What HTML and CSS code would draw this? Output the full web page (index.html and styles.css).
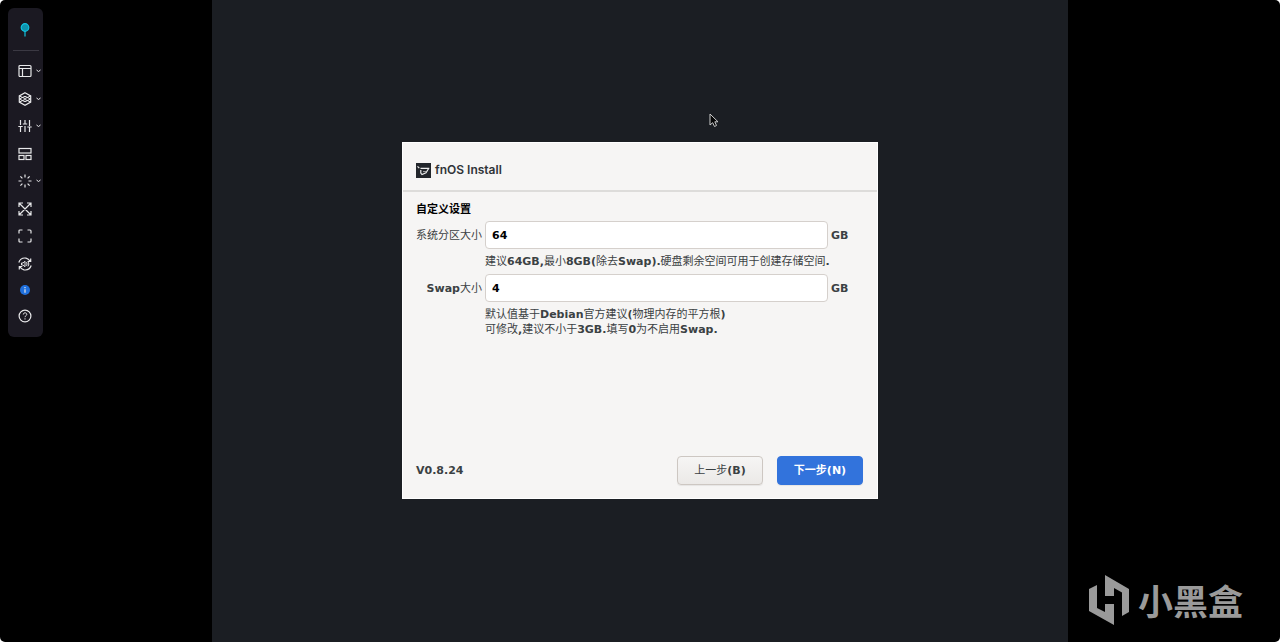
FILE: index.html
```
<!DOCTYPE html>
<html lang="zh-CN">
<head>
<meta charset="utf-8">
<title>fnOS Install</title>
<link rel="stylesheet" href="styles.css">
</head>
<body>
<div class="console">
  <nav class="toolbar" aria-label="Console">
    <button class="tool tool-pin" aria-label="Pin"><svg class="icon" viewBox="0 0 14 14"><circle cx="7" cy="4.500" r="3.800" fill="#0e93ad" stroke="#12c3e0"/><path d="M7 8v5.500" stroke="#12c3e0"/></svg></button>
    <hr class="divider">
    <button class="tool" aria-label="Layout"><svg class="icon" viewBox="0 0 14 14"><rect x="1" y="1.500" width="12" height="11" rx="1"/><path d="M1 4.500h12M4.500 4.500v8"/></svg><svg class="caret" viewBox="0 0 5 4"><path d="M.5 1l2 1.500 2-1.500"/></svg></button>
    <button class="tool" aria-label="View"><svg class="icon" viewBox="0 0 14 14"><path d="M7 .8l5.700 3.100v6.200L7 13.200l-5.700-3.100V3.900z"/><path class="fine" d="M1.300 4L7 6.500 12.700 4M1.300 10L7 7.500l5.700 2.500M1.300 7L7 4.300 12.700 7 7 9.700z"/></svg><svg class="caret" viewBox="0 0 5 4"><path d="M.5 1l2 1.500 2-1.500"/></svg></button>
    <button class="tool" aria-label="Settings"><svg class="icon" viewBox="0 0 14 14"><path d="M2.500 1v5M.3 7.500h4.400M2.500 8v5M7 1v3.500M4.800 5h4.400M7 7v6M11.500 1v6M9.300 8h4.400M11.500 8v5"/></svg><svg class="caret" viewBox="0 0 5 4"><path d="M.5 1l2 1.500 2-1.500"/></svg></button>
    <button class="tool" aria-label="Panels"><svg class="icon" viewBox="0 0 14 14"><rect x="1" y="1.500" width="12" height="4.500"/><rect x="1" y="8.500" width="5" height="4"/><rect x="8" y="8.500" width="5" height="4"/></svg></button>
    <button class="tool" aria-label="Power"><svg class="icon" viewBox="0 0 14 14"><path d="M7 .5v3M7 10.500v3M.5 7h3M10.500 7h3M2.400 2.400l2 2M9.600 9.600l2 2M11.600 2.400l-2 2M4.400 9.600l-2 2"/></svg><svg class="caret" viewBox="0 0 5 4"><path d="M.5 1l2 1.500 2-1.500"/></svg></button>
    <button class="tool" aria-label="Scale"><svg class="icon" viewBox="0 0 14 14"><path d="M1 5V1h4M9 1h4v4M13 9v4H9M5 13H1V9M1.500 1.500l11 11M12.500 1.500l-11 11"/></svg></button>
    <button class="tool" aria-label="Full screen"><svg class="icon" viewBox="0 0 14 14"><path d="M1 4.500V2q0-1 1-1h2.500M9.500 1H12q1 0 1 1v2.500M13 9.500V12q0 1-1 1H9.500M4.500 13H2q-1 0-1-1V9.500"/></svg></button>
    <button class="tool" aria-label="Audio"><svg class="icon" viewBox="0 0 14 14"><path d="M.8 5.500C2 2 5 .7 8 1.100q2.500.5 4.300 3.200M12.700 1.500v3h-3M13.200 8.500C12 12 9 13.300 6 12.900q-2.500-.5-4.300-3.200M1.300 12.500v-3h3"/><path class="fine" d="M3.500 6v2H5l2 1.700V4.300L5 6zM8.500 5.200q1.200 1.800 0 3.600M10 4.600q1.800 2.400 0 4.800"/></svg></button>
    <button class="tool tool-info" aria-label="Info"><svg class="icon" viewBox="0 0 14 14"><circle cx="7" cy="7" r="5" fill="#1f6fdc" stroke="none"/><path d="M7 6.200v3.600M7 4v1.200"/></svg></button>
    <button class="tool" aria-label="Help"><svg class="icon" viewBox="0 0 14 14"><circle cx="7" cy="7" r="5.900"/><path class="fine" d="M5.300 5.500C5.300 3.200 8.800 3.300 8.800 5.400 8.800 6.700 7 6.700 7 8.200M7 9.300v1.200"/></svg></button>
  </nav>

  <main class="screen">
    <form class="dialog">
      <header class="dialog-head">
        <svg class="app-logo" viewBox="0 0 15 15"><path fill="#22262b" d="M0 0h15v15H0z"/><path d="M1.500 3.300l1.800 1.900M4.500 5.300h8.800M4.800 7v3l1.200 1.500 4-1.700 2.500-4" fill="none" stroke="#eee" stroke-width="1.200"/><path d="M7 8.600h3.200" stroke="#aaa"/></svg>
        <h1 class="title">fnOS Install</h1>
      </header>
      <section class="content">
        <h2 class="subtitle">自定义设置</h2>
        <div class="fields">
          <label class="name" for="system-size">系统分区大小</label>
          <input class="size" id="system-size" type="text" value="64">
          <b>GB</b>
          <p class="hint">建议<b>64GB,</b>最小<b>8GB(</b>除去<b>Swap).</b>硬盘剩余空间可用于创建存储空间<b>.</b></p>
          <label class="name" for="swap-size"><b>Swap</b>大小</label>
          <input class="size" id="swap-size" type="text" value="4">
          <b>GB</b>
          <p class="hint">默认值基于<b>Debian</b>官方建议<b>(</b>物理内存的平方根<b>)</b><br>可修改<b>,</b>建议不小于<b>3GB.</b>填写<b>0</b>为不启用<b>Swap.</b></p>
        </div>
      </section>
      <footer class="dialog-foot">
        <b class="version">V0.8.24</b>
        <button class="btn" type="button">上一步<b>(B)</b></button>
        <button class="btn btn-primary" type="button">下一步<b>(N)</b></button>
      </footer>
    </form>
    <svg class="cursor" viewBox="0 0 10 15"><path d="M1 1v11l2.700-2.300L5.500 13.500l2-1-1.700-3.700H9z" fill="#050505" stroke="#ccc"/></svg>
  </main>

  <div class="watermark">
    <svg class="brand" viewBox="0 0 42 50"><path d="M17 0l24 14v23l-7 4V17.500L26 13v8h-9zM1 14l8-4v23l8 4v-8h9v21L1 36z"/></svg>
    <span>小黑盒</span>
  </div>
</div>
</body>
</html>
```
FILE: styles.css
```
* { box-sizing: border-box; }

html { background: #fff; }

body {
  margin: 0;
  font: 11px/15px "DejaVu Sans", "Noto Sans CJK SC", sans-serif;
  color: #3b4143;
}

button { font: inherit; color: inherit; }

.console {
  position: relative;
  display: flex;
  justify-content: center;
  height: 100vh;
  background: #000;
  border-radius: 5px;
  overflow: hidden;
}

/* Floating toolbar over the remote screen */
.toolbar {
  position: absolute;
  top: 8px;
  left: 8px;
  width: 35px;
  padding: 8px 0;
  display: flex;
  flex-direction: column;
  background: #1b1922;
  border-radius: 6px;
}

.tool {
  display: grid;
  grid-template-columns: 14px 5px;
  align-items: center;
  column-gap: 4px;
  height: 28px;
  margin: 0 0 0 10px;
  padding: 0;
  border: 0;
  background: none;
}

.tool:nth-of-type(odd) { height: 27px; }
.tool.tool-pin { height: 28px; }
.tool.tool-info { height: 25px; }

.icon, .caret {
  fill: none;
  stroke: #e8e8ea;
  stroke-width: 1.2;
}

.icon { width: 14px; height: 14px; }
.caret { width: 5px; height: 4px; stroke-width: 1; }
.fine { stroke-width: 1; }

.divider {
  width: 26px;
  height: 1px;
  margin: 6px 0 6px 5px;
  border: 0;
  background: #3b3943;
}

.screen {
  position: relative;
  height: 100%;
  aspect-ratio: 4 / 3;
  padding-bottom: 1px;
  display: grid;
  place-items: center;
  background: #1b1e23;
}

.cursor {
  position: absolute;
  top: 113px;
  left: 497px;
  width: 10px;
  height: 15px;
}

/* Installer dialog */
.dialog {
  display: flex;
  flex-direction: column;
  width: 476px;
  min-height: 357px;
  background: #f6f5f4;
  border: 1px solid #fff;
}

.dialog-head {
  display: flex;
  align-items: center;
  gap: 4px;
  padding: 17px 13px 10px;
  border-bottom: 2px solid #dddcda;
}

.app-logo { width: 15px; height: 15px; }

.title {
  margin: 0;
  font: 600 12px/20px Inter, sans-serif;
  color: #303438;
}

.content { flex: 1; padding: 10px 13px 0; }

.subtitle {
  margin: 0 0 4px;
  font-size: 11px;
  line-height: 15px;
  color: #000;
}

.fields {
  display: grid;
  grid-template-columns: auto 1fr 33px;
  column-gap: 3px;
  row-gap: 5px;
  align-items: center;
}

.name { text-align: right; }

.size {
  width: 100%;
  height: 28px;
  padding: 0 6px;
  border: 1px solid #d5d0cc;
  border-radius: 4px;
  background: #fff;
  font: bold 11px "DejaVu Sans", sans-serif;
  color: #000;
}

.hint {
  grid-column: 2 / -1;
  margin: 0;
  white-space: nowrap;
}

.dialog-foot {
  display: flex;
  align-items: center;
  gap: 14px;
  padding: 0 14px 13px 13px;
}

.version { margin-right: auto; }

.btn {
  width: 86px;
  height: 29px;
  padding: 0;
  border: 1px solid #cdc7c2;
  border-radius: 4px;
  background: linear-gradient(#f6f5f4, #ebe9e7);
  box-shadow: 0 1px 1px #0001;
}

.btn-primary {
  border-color: #3273dc;
  background: #3273dc;
  color: #fff;
  font-weight: bold;
}

.watermark {
  position: absolute;
  right: 37px;
  bottom: 17px;
  display: flex;
  align-items: center;
  gap: 8px;
  font: bold 35px/50px "Noto Sans CJK SC", sans-serif;
  color: #9a9a9a;
}

.brand { width: 42px; height: 50px; fill: #9a9a9a; }
```
